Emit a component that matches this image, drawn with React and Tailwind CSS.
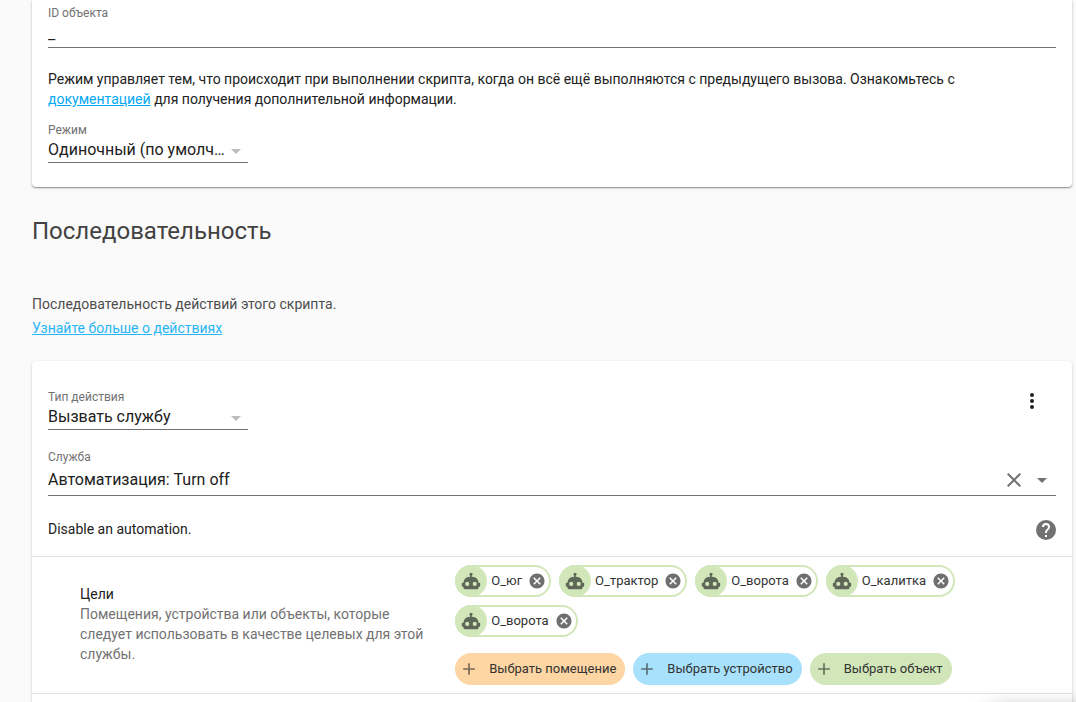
import React, { useState } from 'react'

const ICONS = {
  robot:
    'M12,2A2,2 0 0,1 14,4C14,4.74 13.6,5.39 13,5.73V7H14A7,7 0 0,1 21,14H22A1,1 0 0,1 23,15V18A1,1 0 0,1 22,19H21V20A2,2 0 0,1 19,22H5A2,2 0 0,1 3,20V19H2A1,1 0 0,1 1,18V15A1,1 0 0,1 2,14H3A7,7 0 0,1 10,7H11V5.73C10.4,5.39 10,4.74 10,4A2,2 0 0,1 12,2M7.5,13A2.5,2.5 0 0,0 5,15.5A2.5,2.5 0 0,0 7.5,18A2.5,2.5 0 0,0 10,15.5A2.5,2.5 0 0,0 7.5,13M16.5,13A2.5,2.5 0 0,0 14,15.5A2.5,2.5 0 0,0 16.5,18A2.5,2.5 0 0,0 19,15.5A2.5,2.5 0 0,0 16.5,13Z',
  closeCircle:
    'M12,2C17.53,2 22,6.47 22,12C22,17.53 17.53,22 12,22C6.47,22 2,17.53 2,12C2,6.47 6.47,2 12,2M15.59,7L12,10.59L8.41,7L7,8.41L10.59,12L7,15.59L8.41,17L12,13.41L15.59,17L17,15.59L13.41,12L17,8.41L15.59,7Z',
  close:
    'M19,6.41L17.59,5L12,10.59L6.41,5L5,6.41L10.59,12L5,17.59L6.41,19L12,13.41L17.59,19L19,17.59L13.41,12L19,6.41Z',
  plus: 'M19,13H13V19H11V13H5V11H11V5H13V11H19V13Z',
  menuDown: 'M7,10L12,15L17,10H7Z',
  dots:
    'M12,16A2,2 0 0,1 14,18A2,2 0 0,1 12,20A2,2 0 0,1 10,18A2,2 0 0,1 12,16M12,10A2,2 0 0,1 14,12A2,2 0 0,1 12,14A2,2 0 0,1 10,12A2,2 0 0,1 12,10M12,4A2,2 0 0,1 14,6A2,2 0 0,1 12,8A2,2 0 0,1 10,6A2,2 0 0,1 12,4Z',
  help:
    'M15.07,11.25L14.17,12.17C13.45,12.89 13,13.5 13,15H11V14.5C11,13.39 11.45,12.39 12.17,11.67L13.41,10.41C13.78,10.05 14,9.55 14,9C14,7.89 13.1,7 12,7A2,2 0 0,0 10,9H8A4,4 0 0,1 12,5A4,4 0 0,1 16,9C16,9.88 15.64,10.67 15.07,11.25M13,19H11V17H13M12,2A10,10 0 0,0 2,12A10,10 0 0,0 12,22A10,10 0 0,0 22,12C22,6.47 17.5,2 12,2Z',
}

const TARGETS = ['О_юг', 'О_трактор', 'О_ворота', 'О_калитка', 'О_ворота']

const PICKERS = [
  { label: 'Выбрать помещение', color: 'bg-[#fed6a4]' },
  { label: 'Выбрать устройство', color: 'bg-[#a8e1fb]' },
  { label: 'Выбрать объект', color: 'bg-[#d2e7b9]' },
]

function Icon({ name, size = 24 }) {
  return (
    <svg width={size} height={size} viewBox="0 0 24 24" fill="currentColor" aria-hidden="true" className="shrink-0">
      <path d={ICONS[name]} />
    </svg>
  )
}

function SelectField({ id, label, options }) {
  return (
    <div className="w-[200px]">
      <label htmlFor={id} className="block text-xs leading-4 text-[#727272]">
        {label}
      </label>
      <div className="relative border-b border-[#727272]">
        <select
          id={id}
          className="block w-full h-6 pr-5 appearance-none bg-transparent text-base leading-6 text-ellipsis outline-none"
        >
          {options.map((option) => (
            <option key={option}>{option}</option>
          ))}
        </select>
        <span className="absolute right-0 top-px text-[#bdbdbd] pointer-events-none">
          <Icon name="menuDown" />
        </span>
      </div>
    </div>
  )
}

function TargetChip({ name, onRemove }) {
  return (
    <div className="flex items-center h-8 pr-0.5 rounded-full bg-[#d2e7b9] text-[13px] text-[#333]">
      <div className="flex items-center justify-center w-8 h-8 rounded-full bg-[#d2e7b9] text-[#5f6858] z-10">
        <Icon name="robot" size={20} />
      </div>
      <div className="flex items-center gap-1.5 h-7 -ml-4 pl-5 pr-[3px] rounded-r-full bg-white">
        <span>{name}</span>
        <button onClick={onRemove} aria-label={`Удалить ${name}`} className="text-[#6f6f6f]">
          <Icon name="closeCircle" size={18} />
        </button>
      </div>
    </div>
  )
}

export default function App() {
  const [objectId, setObjectId] = useState('_')
  const [service, setService] = useState('Автоматизация: Turn off')
  const [targets, setTargets] = useState(TARGETS)

  const removeTarget = (index) => setTargets(targets.filter((_, i) => i !== index))

  return (
    <div className="h-screen overflow-hidden bg-[#fafafa] pl-8 pr-1 font-[Roboto,sans-serif] text-sm leading-5 text-[#212121]">
      {/* Script settings */}
      <section className="px-4 pt-[5px] pb-6 rounded-b bg-white shadow-[0_1px_1px_rgba(0,0,0,0.3),0_1px_3px_rgba(0,0,0,0.2)]">
        <label htmlFor="object-id" className="block text-xs leading-4 text-[#727272]">
          ID объекта
        </label>
        <input
          id="object-id"
          value={objectId}
          onChange={(e) => setObjectId(e.target.value)}
          className="block w-full h-[27px] pb-0.5 text-base border-b border-[#727272] outline-none"
        />
        <p className="mt-[21px] mb-[13px]">
          Режим управляет тем, что происходит при выполнении скрипта, когда он всё ещё выполняются с предыдущего
          вызова. Ознакомьтесь с{' '}
          <a href="#docs" className="text-[#03a9f4] underline">
            документацией
          </a>{' '}
          для получения дополнительной информации.
        </p>
        <SelectField id="mode" label="Режим" options={['Одиночный (по умолчанию)', 'Перезапуск', 'Очередь']} />
      </section>

      {/* Sequence intro */}
      <h2 className="mt-7 text-2xl leading-8 text-[#424242]">Последовательность</h2>
      <p className="mt-[45px] leading-6 text-[#4d4d4d]">
        Последовательность действий этого скрипта.
        <br />
        <a href="#actions" className="text-[#29b6f6] underline">
          Узнайте больше о действиях
        </a>
      </p>

      {/* Action card */}
      <section className="mt-[21px] pb-16 rounded bg-white shadow-[0_1px_3px_rgba(0,0,0,0.2)]">
        <div className="flex items-start justify-between pl-4 pr-7 pt-7">
          <SelectField id="action-type" label="Тип действия" options={['Вызвать службу', 'Условие', 'Задержка']} />
          <button aria-label="Меню">
            <Icon name="dots" />
          </button>
        </div>

        <div className="px-4 mt-[19px]">
          <label htmlFor="service" className="block text-xs leading-4 text-[#727272]">
            Служба
          </label>
          <div className="flex items-center gap-1 h-[31px] pr-0.5 border-b border-[#727272]">
            <input
              id="service"
              value={service}
              onChange={(e) => setService(e.target.value)}
              className="flex-1 min-w-0 text-base outline-none"
            />
            <button onClick={() => setService('')} aria-label="Очистить" className="text-[#727272]">
              <Icon name="close" />
            </button>
            <button aria-label="Показать службы" className="text-[#727272]">
              <Icon name="menuDown" />
            </button>
          </div>
        </div>

        <div className="flex items-center justify-between h-[60px] pl-4 pr-3.5 pt-2">
          <p className="pb-0.5">Disable an automation.</p>
          <button aria-label="Справка" className="text-[#727272]">
            <Icon name="help" />
          </button>
        </div>

        <div className="flex items-center px-4 border-y border-[#e0e0e0]">
          <div className="flex-1 pl-8 pr-4 pb-0.5">
            <h3>Цели</h3>
            <p className="text-[#727272]">
              Помещения, устройства или объекты, которые следует использовать в качестве целевых для этой службы.
            </p>
          </div>
          <div className="w-3/5 px-1 py-2">
            <div className="flex flex-wrap gap-2">
              {targets.map((name, i) => (
                <TargetChip key={i} name={name} onRemove={() => removeTarget(i)} />
              ))}
            </div>
            <div className="flex flex-wrap gap-2 mt-4">
              {PICKERS.map(({ label, color }) => (
                <button
                  key={label}
                  className={`flex items-center h-8 pl-1 pr-[9px] rounded-full text-[13px] text-[#333] ${color}`}
                >
                  <span className="mr-2.5 text-[#212121]/60">
                    <Icon name="plus" size={20} />
                  </span>
                  {label}
                </button>
              ))}
            </div>
          </div>
        </div>
      </section>

      {/* Save button, slid below the edge of the window */}
      <div className="fixed -bottom-14 -right-8 w-32 h-12 rounded-full shadow-[0_0_20px_rgba(0,0,0,0.4)]" />
    </div>
  )
}
